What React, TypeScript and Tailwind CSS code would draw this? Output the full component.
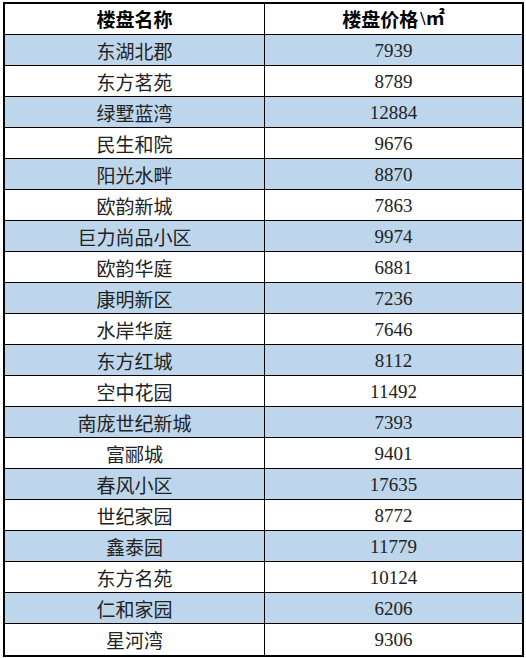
import React from "react"

// 楼盘价格表
const rows: [string, string][] = [
  ["东湖北郡", "7939"],
  ["东方茗苑", "8789"],
  ["绿墅蓝湾", "12884"],
  ["民生和院", "9676"],
  ["阳光水畔", "8870"],
  ["欧韵新城", "7863"],
  ["巨力尚品小区", "9974"],
  ["欧韵华庭", "6881"],
  ["康明新区", "7236"],
  ["水岸华庭", "7646"],
  ["东方红城", "8112"],
  ["空中花园", "11492"],
  ["南庞世纪新城", "7393"],
  ["富郦城", "9401"],
  ["春风小区", "17635"],
  ["世纪家园", "8772"],
  ["鑫泰园", "11779"],
  ["东方名苑", "10124"],
  ["仁和家园", "6206"],
  ["星河湾", "9306"],
]

const cjk = "font-['Noto_Sans_CJK_SC','Noto_Sans',sans-serif]"
const num = "font-['Liberation_Serif','Noto_Sans_CJK_SC',serif]"

export default function App() {
  return (
    <div className="w-[526px] h-[658px] bg-white pt-[2px] pl-[3px]">
      <div className="w-[521px] border-2 border-black">
        {/* 表头 */}
        <div className="grid grid-cols-[259px_1px_257px] h-[31px] border-b border-black">
          <div className={`flex items-center justify-center text-[19px] font-bold text-black ${cjk}`}>
            楼盘名称
          </div>
          <div className="bg-black" />
          <div className={`flex items-center justify-center text-[19px] font-bold text-black ${cjk}`}>
            楼盘价格<span className={`${num} font-bold ml-[2px]`}>\㎡</span>
          </div>
        </div>

        {rows.map(([name, price], i) => (
          <div
            key={name}
            className={`grid grid-cols-[259px_1px_257px] h-[31px] ${i < rows.length - 1 ? "border-b border-black" : "h-[30px]"} ${
              i % 2 === 0 ? "bg-[#bdd6ec]" : "bg-white"
            }`}
          >
            <div className={`flex items-center justify-center pt-[2px] text-[19px] text-[#222] ${cjk}`}>{name}</div>
            <div className="bg-black" />
            <div className={`flex items-center justify-center pt-[2px] text-[19px] text-[#222] ${num}`}>{price}</div>
          </div>
        ))}
      </div>
    </div>
  )
}
